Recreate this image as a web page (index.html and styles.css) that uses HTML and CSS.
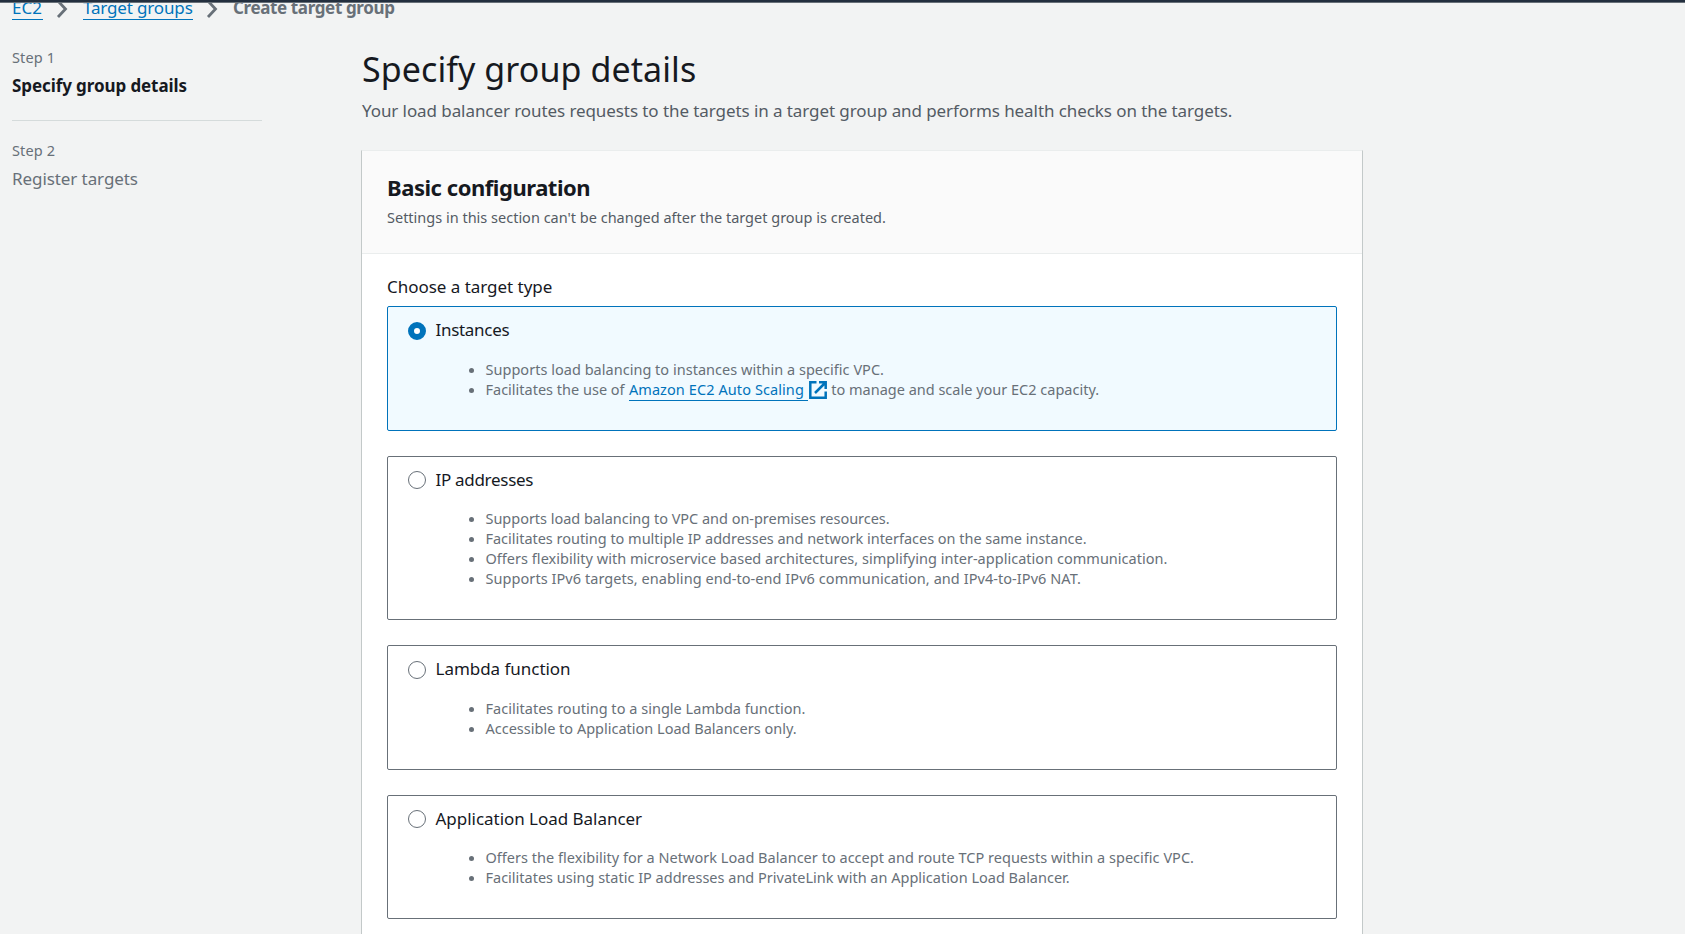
FILE: index.html
```html
<!DOCTYPE html>
<html lang="en">
<head>
<meta charset="utf-8">
<title>Create target group</title>
<link rel="stylesheet" href="styles.css">
</head>
<body>
<div class="topbar"></div>
<nav class="crumbs">
  <a class="crumb crumb-ec2" href="#">EC2</a>
  <svg class="chev" viewBox="0 0 12 20"><path d="M2 2 9.5 10 2 18"/></svg>
  <a class="crumb crumb-groups" href="#">Target groups</a>
  <svg class="chev" viewBox="0 0 12 20"><path d="M2 2 9.5 10 2 18"/></svg>
  <span class="crumb-current">Create target group</span>
</nav>
<div class="layout">
  <aside class="steps">
    <div class="step">
      <div class="step-no">Step 1</div>
      <div class="step-name active">Specify group details</div>
    </div>
    <div class="step">
      <div class="step-no">Step 2</div>
      <div class="step-name">Register targets</div>
    </div>
  </aside>
  <main class="content">
    <h1>Specify group details</h1>
    <p class="lead">Your load balancer routes requests to the targets in a target group and performs health checks on the targets.</p>
    <section class="panel">
      <header class="panel-head">
        <h2>Basic configuration</h2>
        <p class="hint">Settings in this section can't be changed after the target group is created.</p>
      </header>
      <div class="panel-body">
        <div class="label">Choose a target type</div>
        <div class="tiles">
          <div class="tile selected">
            <div class="tile-title tight"><i class="radio"></i><span>Instances</span></div>
            <ul>
              <li class="loose">Supports load balancing to instances within a specific VPC.</li>
              <li>Facilitates the use of <a class="ext" href="#">Amazon EC2 Auto Scaling</a><svg class="ext-icon" viewBox="0 0 18 18"><path d="M7.5 1.3H1.3v15.4h15.4V10.5M10 1.3h6.7V8M16.5 1.5 6 12"/></svg> to manage and scale your EC2 capacity.</li>
            </ul>
          </div>
          <div class="tile">
            <div class="tile-title tight"><i class="radio"></i><span>IP addresses</span></div>
            <ul>
              <li class="snug">Supports load balancing to VPC and on-premises resources.</li>
              <li class="snug">Facilitates routing to multiple IP addresses and network interfaces on the same instance.</li>
              <li class="loose">Offers flexibility with microservice based architectures, simplifying inter-application communication.</li>
              <li class="looser">Supports IPv6 targets, enabling end-to-end IPv6 communication, and IPv4-to-IPv6 NAT.</li>
            </ul>
          </div>
          <div class="tile">
            <div class="tile-title"><i class="radio"></i><span>Lambda function</span></div>
            <ul>
              <li class="loose">Facilitates routing to a single Lambda function.</li>
              <li>Accessible to Application Load Balancers only.</li>
            </ul>
          </div>
          <div class="tile">
            <div class="tile-title"><i class="radio"></i><span>Application Load Balancer</span></div>
            <ul>
              <li class="loose">Offers the flexibility for a Network Load Balancer to accept and route TCP requests within a specific VPC.</li>
              <li>Facilitates using static IP addresses and PrivateLink with an Application Load Balancer.</li>
            </ul>
          </div>
        </div>
      </div>
    </section>
  </main>
</div>
</body>
</html>
```

FILE: styles.css
```css
* { box-sizing: border-box; }
html, body { height: 100%; }
body {
  margin: 0;
  overflow: hidden;
  background: #f2f3f3;
  color: #16191f;
  font: 17px/27.5px "Noto Sans", "Open Sans", sans-serif;
  letter-spacing: -0.03px;
}
h1, h2, p, ul { margin: 0; padding: 0; }
a { color: #0073bb; text-decoration: none; }

.topbar { position: relative; z-index: 1; height: 3px; background: #232f3e; border-bottom: 1px solid #687078; }
.crumbs { display: flex; align-items: center; height: 27px; margin-top: -9px; padding-left: 12px; white-space: nowrap; }
.crumb { height: 25px; line-height: 25.5px; border-bottom: 1px solid #0073bb; letter-spacing: -0.15px; }
.crumb-ec2 { width: 31px; letter-spacing: 0; }
.crumb-groups { width: 110px; }
.crumb-current { color: #687078; font-weight: 700; letter-spacing: -0.37px; }
.chev { width: 12px; height: 20px; margin: 3px 15.5px 1px 12.5px; fill: none; stroke: #687078; stroke-width: 2.8; }

.layout { display: flex; padding-left: 12px; }
.steps { width: 250px; padding-top: 26px; }
.step + .step { margin-top: 20px; padding-top: 19px; border-top: 1px solid #d5dbdb; }
.step-no { color: #687078; font-size: 14.5px; line-height: 20px; letter-spacing: 0.15px; }
.step-name { margin-top: 5px; color: #687078; letter-spacing: -0.08px; }
.step-name.active { color: #16191f; font-weight: 700; letter-spacing: -0.09px; }

.content { width: 1002px; margin-left: 99px; padding-top: 26px; }
h1 { padding-left: 1px; font-size: 34px; font-weight: 400; line-height: 45px; letter-spacing: 0.08px; }
.lead { padding-left: 1px; margin-top: 5px; color: #545b64; letter-spacing: -0.08px; }
.panel { height: 800px; margin-top: 25px; background: #fff; border: 1px solid #c3c9c9; border-top-color: #eaeded; }
.panel-head { height: 103px; padding: 22px 25px 0; background: #fafafa; border-bottom: 1px solid #eaeded; }
h2 { font-size: 22px; font-weight: 700; line-height: 28px; letter-spacing: -0.46px; }
.hint { margin-top: 6px; color: #545b64; font-size: 14.5px; line-height: 20px; letter-spacing: 0; }
.panel-body { padding: 19px 25px 0; }
.tiles { display: grid; gap: 25px; margin-top: 6px; }
.tile { height: 124.5px; padding: 9px 20px; border: 1px solid #687078; border-radius: 2px; }
.tile:nth-child(2) { height: 164.5px; }
.tile.selected { background: #f1faff; border-color: #0073bb; }
.tile-title { display: flex; align-items: center; gap: 9.5px; }
.tile-title.tight { letter-spacing: -0.3px; }
.radio { width: 18px; height: 18px; margin-top: 2px; border: 1.5px solid #687078; border-radius: 50%; background: #fff; }
.selected .radio { border: 6px solid #0073bb; }
ul { margin: 15px 0 0 77.5px; color: #687078; font-size: 14.5px; line-height: 20px; letter-spacing: 0; }
li { white-space: nowrap; }
.snug { letter-spacing: -0.025px; }
.loose { letter-spacing: 0.024px; }
.looser { letter-spacing: 0.06px; }
.ext { margin-left: 0.5px; padding: 0 4px 1px 0; border-bottom: 1px solid #0073bb; letter-spacing: 0.09px; }
.ext-icon { width: 18px; height: 18px; margin: -4px 0.5px -4px 1px; vertical-align: 0; position: relative; top: 0; fill: none; stroke: #0073bb; stroke-width: 2.5; }
```
